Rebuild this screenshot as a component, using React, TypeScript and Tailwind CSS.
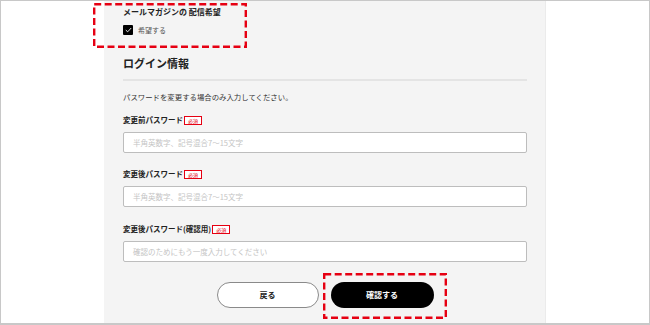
import React from "react";

const font = { fontFamily: '"Noto Sans CJK JP", "Noto Sans", sans-serif' };

function Badge() {
  return (
    <span className="ml-[1px] inline-flex h-[9px] w-[18px] items-center justify-center border border-[#e60012] bg-white text-[5px] leading-none text-[#e60012]">
      必須
    </span>
  );
}

function Field({ label, placeholder, top }: { label: string; placeholder: string; top: string }) {
  return (
    <div className={top}>
      <div className="flex h-[12px] items-center">
        <span className="text-[7.5px] font-bold leading-[12px] text-[#222]">{label}</span>
        <Badge />
      </div>
      <div className="mt-[6px] flex h-[21px] items-center rounded-[2px] border border-[#bdbdbd] bg-white pl-[9px]">
        <span className="text-[7.5px] leading-none text-[#c4c4c4]">{placeholder}</span>
      </div>
    </div>
  );
}

function DashBox({ className, w, h }: { className: string; w: number; h: number }) {
  return (
    <svg className={className} width={w} height={h} viewBox={`0 0 ${w} ${h}`}>
      <rect x="1.2" y="1.2" width={w - 2.4} height={h - 2.4} fill="none" stroke="#e60012" strokeWidth="2.4" strokeDasharray="7 3.5" />
    </svg>
  );
}

export default function App() {
  return (
    <div className="relative h-[325px] w-[650px] overflow-hidden border-x border-t border-b-2 border-[#c8c8c8] bg-white" style={font}>
      <div className="ml-[103px] h-full w-[442px] border-r border-[#ebebeb] bg-[#f4f4f4] pl-[19px] pr-[18px] pt-[5px]">
        <div className="text-[8px] font-bold leading-[12px] text-[#222]">メールマガジンの 配信希望</div>
        <div className="mt-[7px] flex h-[10px] items-center">
          <span className="flex h-[10px] w-[10px] items-center justify-center rounded-[1px] bg-black">
            <svg width="7" height="6" viewBox="0 0 7 6">
              <path d="M0.8 3.1 L2.7 4.8 L6.2 1" fill="none" stroke="#fff" strokeWidth="0.9" />
            </svg>
          </span>
          <span className="ml-[5px] text-[7px] leading-none text-[#555]">希望する</span>
        </div>
        <div className="mt-[20px] text-[11px] font-bold leading-[16px] text-[#222]">ログイン情報</div>
        <div className="mt-[8px] h-[2px] bg-[#e4e4e4]" />
        <div className="mt-[10px] text-[7.4px] leading-[12px] text-[#333]">パスワードを変更する場合のみ入力してください。</div>
        <Field top="mt-[11px]" label="変更前パスワード" placeholder="半角英数字、記号混合7～15文字" />
        <Field top="mt-[15px]" label="変更後パスワード" placeholder="半角英数字、記号混合7～15文字" />
        <Field top="mt-[16px]" label="変更後パスワード(確認用)" placeholder="確認のためにもう一度入力してください" />
        <div className="mt-[20px] flex justify-center gap-[12px]">
          <div className="flex h-[26px] w-[102px] items-center justify-center rounded-full border border-[#8a8a8a] bg-white text-[8px] font-bold text-[#222]">
            戻る
          </div>
          <div className="flex h-[26px] w-[103px] items-center justify-center rounded-full bg-black text-[8px] font-bold text-white">
            確認する
          </div>
        </div>
      </div>
      <DashBox className="absolute left-[92px] top-[2px]" w={154} h={45} />
      <DashBox className="absolute left-[322px] top-[272px]" w={124} h={46} />
    </div>
  );
}
